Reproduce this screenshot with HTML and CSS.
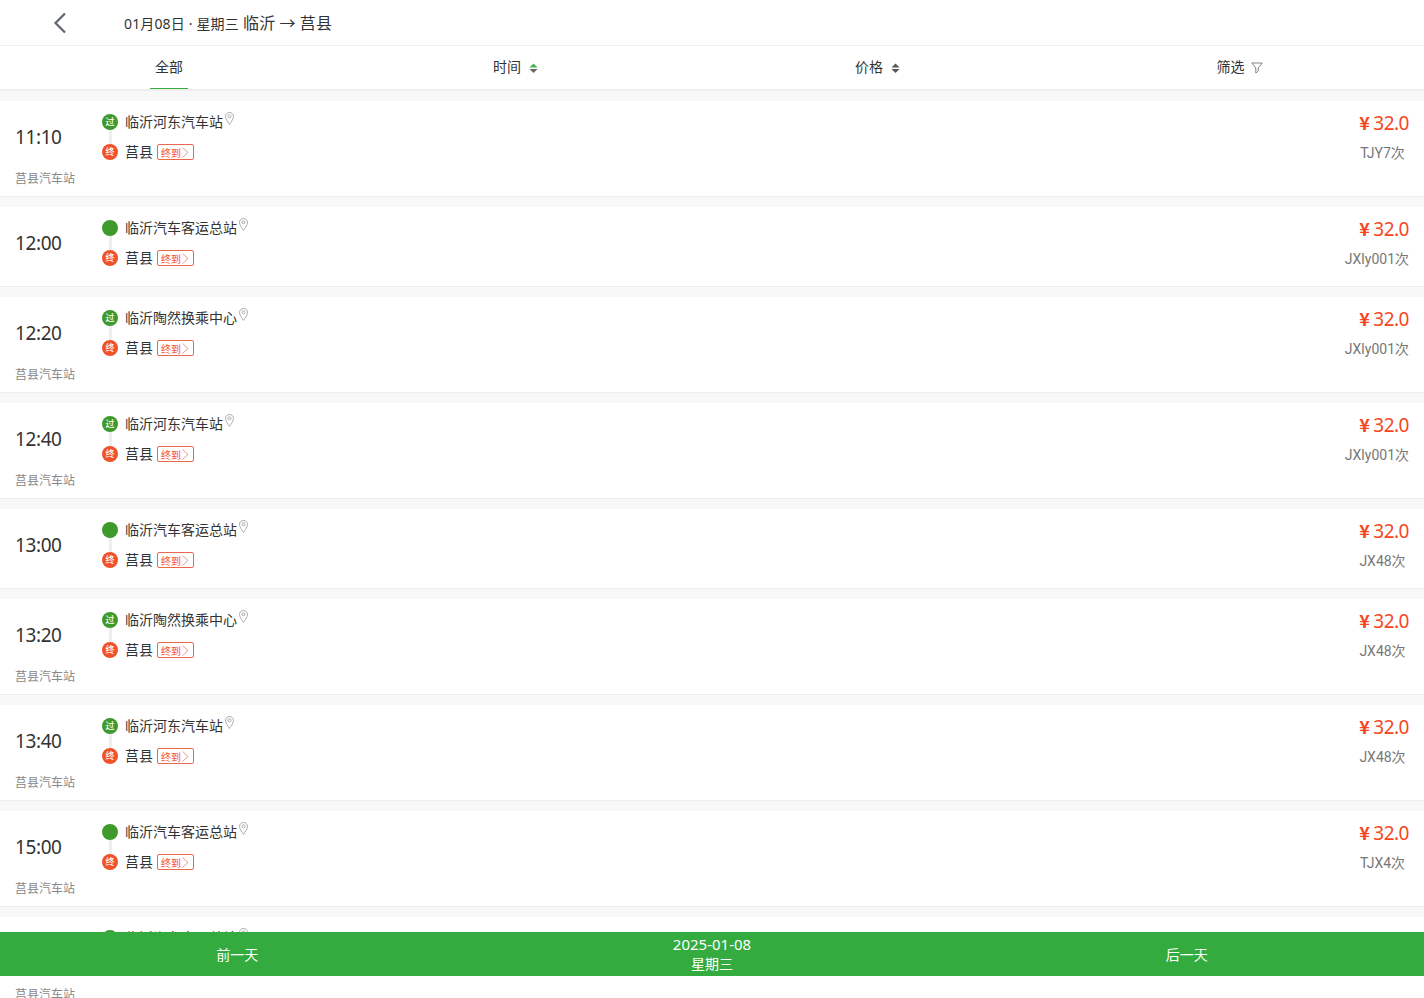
FILE: index.html
```html
<!DOCTYPE html>
<html lang="zh">
<head>
<meta charset="utf-8">
<title>班次列表</title>
<link rel="stylesheet" href="styles.css">
</head>
<body>
<header class="topbar">
  <svg class="back" width="14" height="22" viewBox="0 0 14 22"><path d="M12 1.500 2.500 11l9.500 9.500" fill="none" stroke="#5f6670" stroke-width="2.200"/></svg>
  <div class="title"><span class="t-date">01月08日 · 星期三</span> <span class="t-route">临沂 → 莒县</span></div>
</header>
<nav class="tabs">
  <div class="tab tab-first"><span class="tab-label active">全部</span></div>
  <div class="tab"><span class="tab-label">时间</span><svg class="sort" width="9" height="10" viewBox="0 0 9 10"><path d="M4.500.5 8.500 4.500H.5z" fill="#4caf50"/><path d="M.5 6h8L4.500 10z" fill="#666"/></svg></div>
  <div class="tab"><span class="tab-label">价格</span><svg class="sort" width="9" height="10" viewBox="0 0 9 10"><path d="M4.500.5 8.500 4.500H.5z" fill="#555"/><path d="M.5 6h8L4.500 10z" fill="#555"/></svg></div>
  <div class="tab"><span class="tab-label">筛选</span><svg class="filter" width="12" height="12" viewBox="0 0 12 12"><path d="M.8 1h10.400L7.200 6v3.200L4.800 11V6z" fill="none" stroke="#777" stroke-width=".9"/></svg></div>
</nav>
<main class="list" id="list"></main>
<footer class="daybar">
  <div class="day-btn">前一天</div>
  <div class="day-now"><div class="day-date">2025-01-08</div><div>星期三</div></div>
  <div class="day-btn">后一天</div>
</footer>
<script src="app.js"></script>
</body>
</html>
```

FILE: styles.css
```css
* { box-sizing: border-box; }
html, body { margin: 0; height: 100%; overflow: hidden; }
body {
  font-family: "Noto Sans", "Noto Sans CJK SC", sans-serif;
  color: #333;
  background: #fff;
}
.topbar {
  height: 46px;
  display: flex;
  align-items: center;
  border-bottom: 1px solid #eee;
  padding-left: 53px;
}
.back { flex: none; margin-right: 57px; }
.title { color: #333; white-space: nowrap; line-height: 22px; margin-top: 2px; }
.t-date { font-size: 14px; letter-spacing: .15px; }
.t-route { font-size: 16px; letter-spacing: .1px; }
.tabs {
  height: 45px;
  display: grid;
  grid-template-columns: 338px repeat(3, 362px);
  border-bottom: 2px solid #eee;
  font-size: 14px;
}
.tab {
  display: flex;
  align-items: center;
  justify-content: center;
  padding-right: 7px;
  height: 43px;
}
.tab-first { padding-right: 0; }
.tab-label { line-height: 42px; height: 43px; color: #333; }
.active { display: block; width: 38px; text-align: center; border-bottom: 1px solid #33ab3e; }
.sort { margin-left: 8px; }
.filter { margin-left: 6px; }
.list { background: #f8f8f8; padding-top: 10px; }
.card {
  background: #fff;
  border-bottom: 1px solid #eee;
  margin-bottom: 10px;
  padding: 6px 15px 13px;
}
.card-labeled { padding-bottom: 9px; }
.main { display: flex; height: 60px; align-items: center; }
.time { width: 87px; font-size: 19px; letter-spacing: -.4px; color: #333; flex: none; line-height: 30px; margin-top: -1px; }
.stops { flex: 1; position: relative; }
.stop { display: flex; align-items: center; height: 30px; font-size: 14px; color: #333; }
.stop-name { margin-top: -2px; }
.dot {
  width: 16px;
  height: 16px;
  border-radius: 50%;
  color: #fff;
  font-size: 9px;
  font-weight: 500;
  line-height: 16px;
  text-align: center;
  margin-right: 7px;
  flex: none;
  position: relative;
  z-index: 1;
}
.dot-start { background: #3f9a2c; }
.dot-end { background: #f0522b; }
.stops::before {
  content: "";
  position: absolute;
  left: 7px;
  top: 20px;
  width: 3px;
  height: 20px;
  background: #eee;
}
.pin { margin: -7px 0 0 2px; }
.tag {
  display: inline-flex;
  align-items: center;
  height: 16px;
  width: 37px;
  margin-left: 4px;
  padding: 2px 0 0 3px;
  border: 1px solid #e8674f;
  border-radius: 2px;
  font-size: 10px;
  color: #f4512a;
  line-height: 12px;
}
.tag svg { margin: -2px 0 0 1px; flex: none; }
.fare { display: flex; flex-direction: column; align-items: flex-end; flex: none; }
.price { height: 30px; font-size: 19px; letter-spacing: -.5px; line-height: 30px; color: #f4471f; }
.yen { font-weight: 700; font-size: 18px; margin-right: 4px; font-family: "Noto Sans CJK SC", sans-serif; }
.train { height: 30px; min-width: 53px; line-height: 32px; text-align: center; font-family: Roboto, "Noto Sans CJK SC", sans-serif; font-size: 14px; color: #777; }
.label { height: 16px; margin-top: 4px; font-size: 12px; line-height: 16px; color: #888; }
.daybar {
  position: fixed;
  left: 0;
  right: 0;
  bottom: 22px;
  height: 44px;
  z-index: 5;
  display: grid;
  grid-template-columns: repeat(3, 1fr);
  align-items: center;
  background: #34ab3e;
  color: #fff;
  font-size: 14px;
  text-align: center;
}
.day-now { line-height: 20px; }
.day-date { font-size: 15px; }
```

FILE: app.js
```js
var rows = [
  ["11:10","临沂河东汽车站","过","TJY7次",true],
  ["12:00","临沂汽车客运总站","","JXly001次",false],
  ["12:20","临沂陶然换乘中心","过","JXly001次",true],
  ["12:40","临沂河东汽车站","过","JXly001次",true],
  ["13:00","临沂汽车客运总站","","JX48次",false],
  ["13:20","临沂陶然换乘中心","过","JX48次",true],
  ["13:40","临沂河东汽车站","过","JX48次",true],
  ["15:00","临沂汽车客运总站","","TJX4次",true],
  ["15:20","临沂汽车客运总站","","TJX4次",true]
];
var pin = '<svg class="pin" width="9" height="13" viewBox="0 0 9 13"><path d="M4.500.5C2.200.5.5 2.200.5 4.400c0 2.600 2.400 5.400 4 8 1.600-2.600 4-5.400 4-8C8.500 2.200 6.800.5 4.500.5z" fill="none" stroke="#999" stroke-width=".8"/><circle cx="4.500" cy="4.300" r="1.500" fill="none" stroke="#999" stroke-width=".8"/></svg>';
var chev = '<svg width="7" height="11" viewBox="0 0 7 11"><path d="M.5.5 6 5.500.5 10.500" fill="none" stroke="#e8806c" stroke-width=".8"/></svg>';
document.getElementById("list").innerHTML = rows.map(function (r) {
  return '<section class="card' + (r[4] ? ' card-labeled' : '') + '"><div class="main">' +
    '<div class="time">' + r[0] + '</div>' +
    '<div class="stops"><div class="stop"><span class="dot dot-start">' + r[2] + '</span><span class="stop-name">' + r[1] + '</span>' + pin + '</div>' +
    '<div class="stop"><span class="dot dot-end">终</span><span class="stop-name">莒县</span><span class="tag">终到' + chev + '</span></div></div>' +
    '<div class="fare"><div class="price"><span class="yen">¥</span>32.0</div><div class="train">' + r[3] + '</div></div>' +
    '</div>' + (r[4] ? '<div class="label">莒县汽车站</div>' : '') + '</section>';
}).join("");
```
